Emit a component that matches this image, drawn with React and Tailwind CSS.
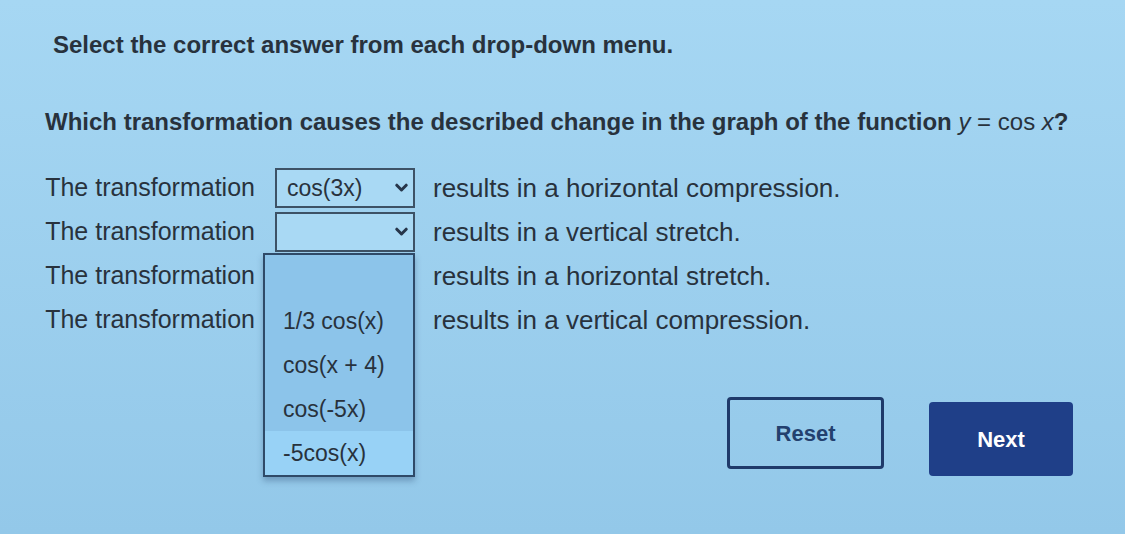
import { useState } from 'react';

const rows = [
  { value: 'cos(3x)', text: 'results in a horizontal compression.' },
  { value: '', text: 'results in a vertical stretch.', open: true },
  { value: '', text: 'results in a horizontal stretch.' },
  { value: '', text: 'results in a vertical compression.' },
];

const options = ['', '1/3 cos(x)', 'cos(x + 4)', 'cos(-5x)', '-5cos(x)'];

function Chevron() {
  return (
    <svg width="13" height="10" viewBox="0 0 13 10" className="shrink-0">
      <path d="M1.8 2.2 L6.5 7 L11.2 2.2" fill="none" stroke="#27364a" strokeWidth="3" strokeLinecap="round" strokeLinejoin="round" />
    </svg>
  );
}

function Dropdown({ value, open }) {
  const [hover] = useState(4);
  return (
    <div className="relative w-[140px] h-[40px]">
      <div className="w-full h-full border-2 border-[#3d5266] bg-[#a9d9f4] flex items-center justify-between pl-[10px] pr-[5px]">
        <span className="text-[23px]">{value}</span>
        <Chevron />
      </div>
      {open && (
        <div className="absolute left-[-12px] top-[41px] w-[152px] border-2 border-[#2f4a68] bg-[#8cc4ea] z-10 shadow-[0_4px_6px_rgba(40,70,110,0.35)]">
          {options.map((o, i) => (
            <div
              key={i}
              className={`h-[44px] flex items-center pl-[18px] text-[23px] ${i === hover ? 'bg-[#98d2f6]' : ''}`}
            >
              {o}
            </div>
          ))}
        </div>
      )}
    </div>
  );
}

export default function App() {
  return (
    <div
      className="w-[1125px] h-[534px] overflow-hidden bg-gradient-to-b from-[#a6d7f3] to-[#93c8e9] text-[#28323d]"
      style={{ fontFamily: '"Liberation Sans", Arial, sans-serif' }}
    >
      <div className="pt-[30px] pl-[53px] text-[24px] leading-[30px] font-bold">
        Select the correct answer from each drop-down menu.
      </div>
      <div className="mt-[47px] pl-[45px] text-[24px] leading-[30px] font-bold">
        Which transformation causes the described change in the graph of the function{' '}
        <span className="italic font-normal">y</span>
        <span className="font-normal"> = cos </span>
        <span className="italic font-normal">x</span>?
      </div>

      <div className="mt-[29px] flex flex-col">
        {rows.map((r, i) => (
          <div key={i} className="h-[44px] flex items-center">
            <div className="w-[255px] text-right text-[25px]">The transformation</div>
            <div className="ml-[20px]">
              <Dropdown value={r.value} open={r.open} />
            </div>
            <div className="ml-[18px] text-[26px]">{r.text}</div>
          </div>
        ))}
      </div>

      <div className="mt-[55px] flex justify-end items-start gap-[45px] pr-[52px]">
        <button className="w-[157px] h-[72px] border-[3px] border-[#1f3a6a] rounded-[4px] text-[22px] font-bold text-[#23406e]">
          Reset
        </button>
        <button className="mt-[5px] w-[144px] h-[74px] bg-[#1f3f88] rounded-[4px] text-[22px] font-bold text-white">
          Next
        </button>
      </div>
    </div>
  );
}
